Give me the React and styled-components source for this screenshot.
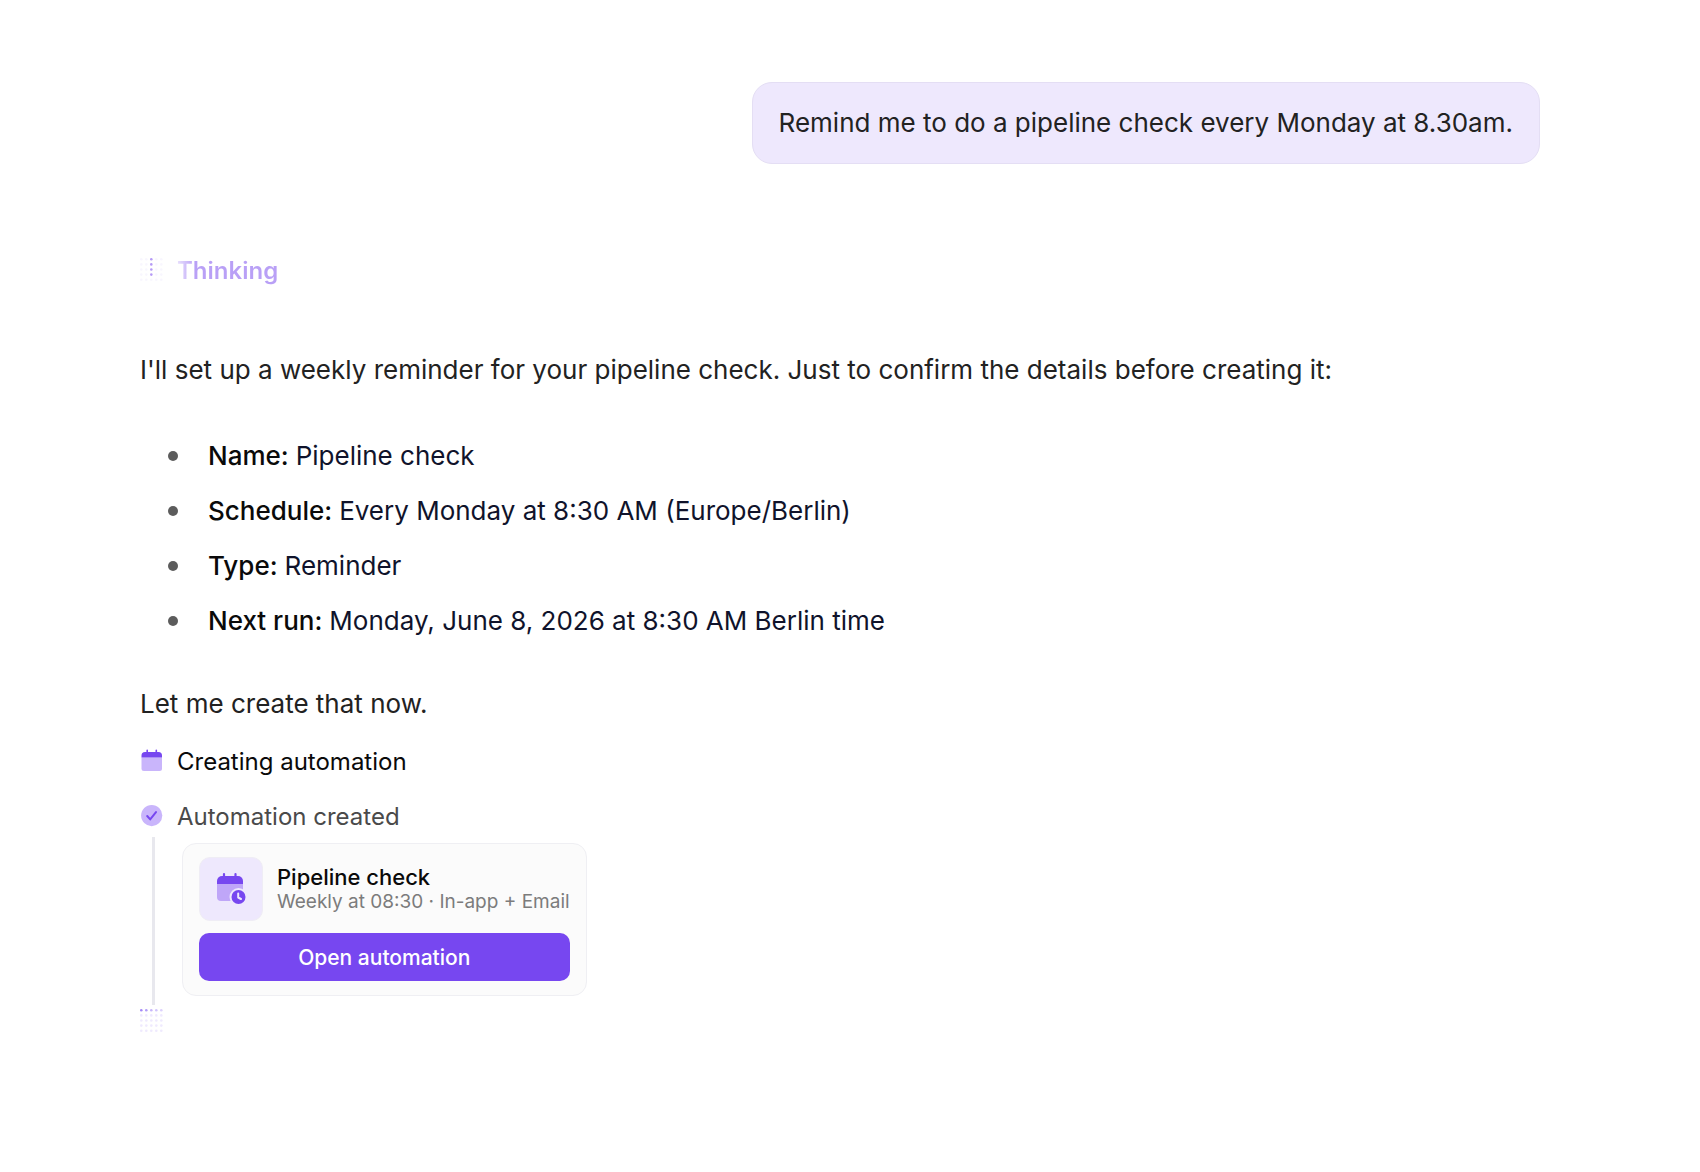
import styled, { createGlobalStyle } from "styled-components";

const GlobalStyle = createGlobalStyle`
  * {
    box-sizing: border-box;
  }
  body {
    margin: 0;
    background-color: #fff;
    color: #222;
    font-family: Inter, "Liberation Sans", sans-serif;
    font-size: 26px;
    line-height: 40px;
  }
`;

const Conversation = styled.main`
  display: flex;
  flex-direction: column;
  padding: 82px 160px 82px 140px;
`;
const UserMessage = styled.p`
  align-self: flex-end;
  margin: 0;
  padding: 20px 26px;
  border: 1px solid #e4def4;
  border-radius: 20px;
  background-color: #eee8fd;
`;
const Paragraph = styled.p`
  margin: 0;
`;
const Reply = styled.section`
  display: flex;
  flex-direction: column;
  margin-top: 59px;
`;
const DetailList = styled.ul`
  display: flex;
  flex-direction: column;
  gap: 15px;
  margin: 46px 0 43px;
  padding: 0 0 0 28px;
  list-style: none;
  color: #10132b;
`;
const Detail = styled.li`
  display: flex;
  align-items: center;

  &::before {
    content: "";
    width: 10px;
    height: 10px;
    margin-right: 30px;
    border-radius: 50%;
    background-color: #5c5c5c;
  }
`;
const DetailName = styled.strong`
  margin-right: 7px;
  font-weight: 500;
  color: #0a0a0a;
`;
const StatusRow = styled.div`
  display: flex;
  align-items: center;
  gap: 13px;
  margin-top: ${({ $top }) => $top}px;
  font-size: 24px;
  color: ${({ $color }) => $color};

  svg {
    display: block;
    margin-bottom: 2px;
  }
`;
const ThinkingText = styled.span`
  font-weight: 600;
  color: transparent;
  background: linear-gradient(90deg, #e9e1fd 0, #b9a0f6 18px);
  background-clip: text;
`;
const Step = styled.div`
  display: flex;
  gap: 27px;
`;
const StepLine = styled.div`
  width: 3px;
  margin-left: 12px;
  background-color: #e8e8ee;
`;
const Card = styled.article`
  display: flex;
  flex-direction: column;
  gap: 12px;
  margin: 6px 0 9px;
  padding: 13px 16px 14px;
  border: 1px solid #efeff3;
  border-radius: 14px;
  background-color: #fbfbfb;
`;
const CardHeader = styled.div`
  display: flex;
  align-items: center;
  gap: 14px;
`;
const IconTile = styled.div`
  display: grid;
  place-items: center;
  width: 64px;
  height: 64px;
  border: 1px solid #efedf5;
  border-radius: 11px;
  background-color: #eee8fd;
`;
const CardTitle = styled.h2`
  margin: 0;
  font-size: 22px;
  font-weight: 500;
  line-height: 26px;
  color: #0a0a0a;
`;
const CardMeta = styled.p`
  margin: 0;
  font-size: 19px;
  line-height: 24px;
  color: #7c7c7c;
`;
const OpenButton = styled.button`
  height: 48px;
  border: 0;
  border-radius: 10px;
  background-color: #7747f0;
  color: #fff;
  font: 500 21px Inter, "Liberation Sans", sans-serif;
  cursor: pointer;
`;
const DotRow = styled.div`
  display: flex;
  padding-top: 4px;
`;

const DOTS = [0, 1, 2, 3, 4];

function DotGrid({ opacityAt, color }) {
  return (
    <svg width="24" height="24" viewBox="0 0 24 24" fill={color} aria-hidden="true">
      {DOTS.map((row) =>
        DOTS.map((col) => (
          <circle
            key={`${row}-${col}`}
            cx={1.3 + col * 5}
            cy={1.3 + row * 5.1}
            r="1.3"
            opacity={opacityAt(row, col)}
          />
        ))
      )}
    </svg>
  );
}

function CalendarIcon() {
  return (
    <svg width="24" height="24" viewBox="0 0 24 24" aria-hidden="true">
      <path d="M1.5 8.5H22v11a2.500 2.500 0 0 1-2.500 2.500H4a2.500 2.500 0 0 1-2.500-2.500z" fill="#c9b5fb" />
      <path d="M1.500 8.500v-2A3.500 3.500 0 0 1 5 3h13.500A3.500 3.500 0 0 1 22 6.500v2z" fill="#7747f0" />
      <path d="M7.200 1.200v3M16.300 1.200v3" stroke="#7747f0" strokeWidth="1.600" strokeLinecap="round" />
    </svg>
  );
}

function CheckIcon() {
  return (
    <svg width="24" height="24" viewBox="0 0 24 24" fill="none" aria-hidden="true">
      <circle cx="11.700" cy="11.600" r="10.600" fill="#c9b5fb" />
      <path
        d="M7.200 12l3 3.400 5.800-7.300"
        stroke="#7747f0"
        strokeWidth="2"
        strokeLinecap="round"
        strokeLinejoin="round"
      />
    </svg>
  );
}

function CalendarClockIcon() {
  return (
    <svg width="32" height="34" viewBox="0 0 32 34" fill="none" aria-hidden="true">
      <path d="M2 12h26v13a4 4 0 0 1-4 4H6a4 4 0 0 1-4-4z" fill="#bfa6f8" />
      <path d="M2 12V9a5 5 0 0 1 5-5h16a5 5 0 0 1 5 5v3z" fill="#7747f0" />
      <path d="M9 2v4M20.500 2v4" stroke="#7747f0" strokeWidth="2.200" strokeLinecap="round" />
      <circle cx="23.500" cy="25" r="9" fill="#eee8fd" />
      <circle cx="23.500" cy="25" r="7" fill="#7747f0" />
      <path d="M23.200 21.500v4l2.800 1.500" stroke="#eee8fd" strokeWidth="2" strokeLinecap="round" strokeLinejoin="round" />
    </svg>
  );
}

const details = [
  { name: "Name:", value: "Pipeline check" },
  { name: "Schedule:", value: "Every Monday at 8:30 AM (Europe/Berlin)" },
  { name: "Type:", value: "Reminder" },
  { name: "Next run:", value: "Monday, June 8, 2026 at 8:30 AM Berlin time" },
];

export default function App() {
  return (
    <>
      <GlobalStyle />
      <Conversation>
        <UserMessage>Remind me to do a pipeline check every Monday at 8.30am.</UserMessage>
        <StatusRow $top={87}>
          <DotGrid color="#a98af5" opacityAt={(row, col) => (col === 2 && row < 4 ? 0.85 : 0.08)} />
          <ThinkingText>Thinking</ThinkingText>
        </StatusRow>
        <Reply>
          <Paragraph>
            I'll set up a weekly reminder for your pipeline check. Just to confirm the details before creating it:
          </Paragraph>
          <DetailList>
            {details.map(({ name, value }) => (
              <Detail key={name}>
                <DetailName>{name}</DetailName>
                <span>{value}</span>
              </Detail>
            ))}
          </DetailList>
          <Paragraph>Let me create that now.</Paragraph>
          <StatusRow $top={18} $color="#0a0a0a">
            <CalendarIcon />
            <span>Creating automation</span>
          </StatusRow>
          <StatusRow $top={15} $color="#4a4a4a">
            <CheckIcon />
            <span>Automation created</span>
          </StatusRow>
          <Step>
            <StepLine />
            <Card>
              <CardHeader>
                <IconTile>
                  <CalendarClockIcon />
                </IconTile>
                <div>
                  <CardTitle>Pipeline check</CardTitle>
                  <CardMeta>Weekly at 08:30 · In-app + Email</CardMeta>
                </div>
              </CardHeader>
              <OpenButton type="button">Open automation</OpenButton>
            </Card>
          </Step>
          <DotRow>
            <DotGrid
              color="#9a7cf6"
              opacityAt={(row, col) => (row === 0 ? [0.9, 0.75, 0.55, 0.45, 0.35][col] : 0.16)}
            />
          </DotRow>
        </Reply>
      </Conversation>
    </>
  );
}
